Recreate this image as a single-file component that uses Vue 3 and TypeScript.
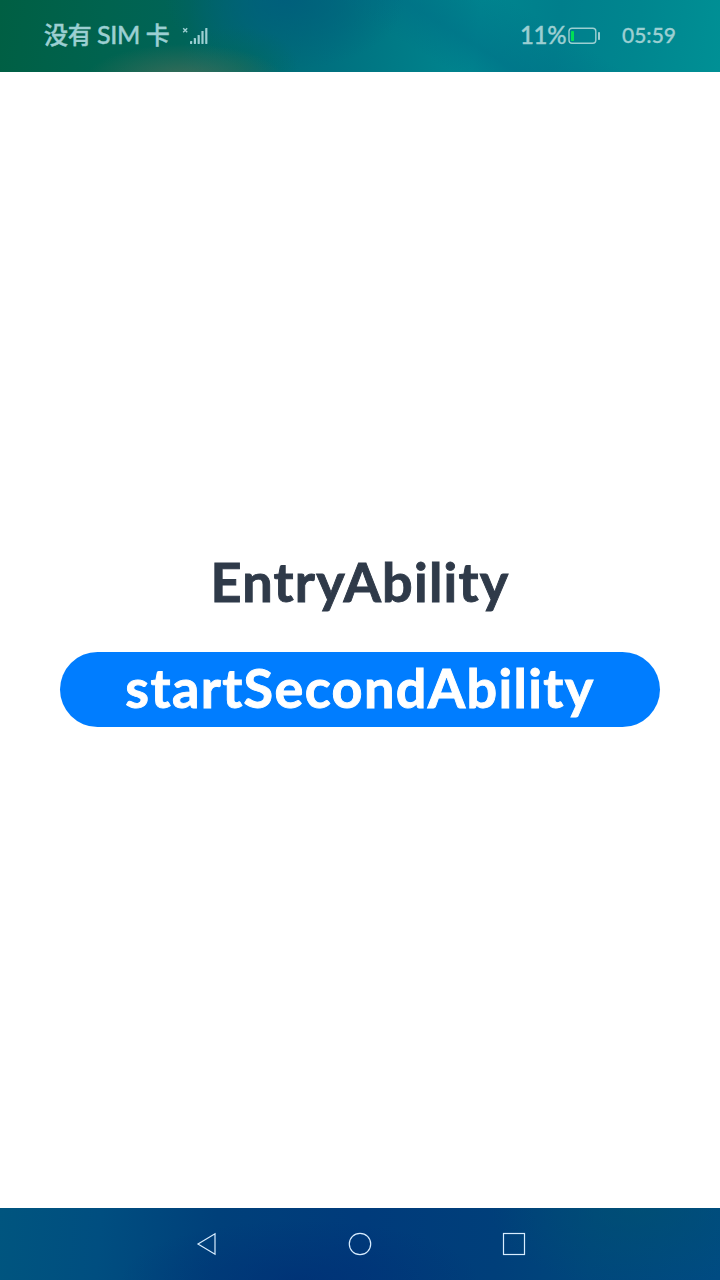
<script setup lang="ts">
const signalBars: number[] = [3, 6, 9, 13, 16]
</script>

<template>
  <div class="screen">
    <header class="status">
      <span class="carrier">没有 <span class="sim">SIM</span> 卡</span>
      <svg class="signal" width="26" height="20" viewBox="0 0 26 20">
        <path d="M1.2 2.2 5.2 6.2M5.2 2.2 1.2 6.2" stroke="currentColor" stroke-width="1.4" />
        <rect
          v-for="(h, i) in signalBars"
          :key="h"
          :x="8 + i * 3.8"
          :y="18 - h"
          width="2.2"
          :height="h"
          rx="0.4"
          fill="currentColor"
        />
      </svg>
      <span class="percent">11%</span>
      <svg class="battery" width="33" height="18" viewBox="0 0 33 18">
        <rect x="1" y="1.2" width="26.8" height="15" rx="3" fill="none" stroke="currentColor" stroke-width="1.4" />
        <rect x="3" y="4" width="3" height="10" rx="0.8" fill="#00df55" />
        <rect x="30" y="5" width="2" height="8" rx="0.8" fill="currentColor" />
      </svg>
      <time class="clock">05:59</time>
    </header>
    <main class="content">
      <h1 class="title">EntryAbility</h1>
      <button class="start"><span class="label">startSecondAbility</span></button>
    </main>
    <nav class="nav">
      <svg width="24" height="24" viewBox="0 0 24 24"><path d="M4 12 21 1.8V22.2Z" /></svg>
      <svg width="24" height="24" viewBox="0 0 24 24"><circle cx="12" cy="12" r="10.7" /></svg>
      <svg width="24" height="24" viewBox="0 0 24 24"><rect x="1.5" y="1.5" width="21" height="21" /></svg>
    </nav>
  </div>
</template>

<style>
body {
  margin: 0;
}
</style>

<style scoped>
.screen {
  width: 720px;
  height: 1280px;
  display: flex;
  flex-direction: column;
  background: #fff;
  font-family: Lato, "Noto Sans CJK SC", sans-serif;
  overflow: hidden;
}
.status {
  box-sizing: border-box;
  height: 72px;
  flex: none;
  display: flex;
  align-items: center;
  padding: 0 44px;
  color: #9ccfd2;
  background:
    radial-gradient(ellipse 100px 36px at 185px 80px, rgba(75, 110, 88, 0.8), rgba(75, 110, 88, 0)),
    radial-gradient(ellipse 60px 40px at 238px 66px, rgba(0, 104, 88, 0.6), rgba(0, 104, 88, 0)),
    radial-gradient(ellipse 120px 70px at 285px 0, rgba(0, 94, 124, 0.9), rgba(0, 94, 124, 0)),
    linear-gradient(212deg, rgba(0, 110, 135, 0) 25%, rgba(0, 110, 135, 0.5) 38%, rgba(0, 110, 135, 0) 46%),
    linear-gradient(98deg, #005f43 0, #00634f 15%, #006458 26%, #006a74 36%, #00707f 46%, #007a86 55%, #00858f 66%, #007f8c 77%, #00868f 88%, #009095 100%);
}
.carrier {
  width: 138px;
  font-size: 24px;
  font-weight: 500;
  line-height: 36px;
  letter-spacing: -0.35px;
  white-space: pre;
  padding-bottom: 3px;
  -webkit-text-stroke: 0.4px currentColor;
}
.sim {
  font-size: 25px;
}
.signal {
  flex: none;
}
.percent {
  margin-left: auto;
  width: 48px;
  font-size: 24px;
  font-weight: 500;
  letter-spacing: -0.3px;
  padding-bottom: 3px;
  -webkit-text-stroke: 0.4px currentColor;
}
.battery {
  flex: none;
}
.clock {
  width: 54px;
  margin-left: 21px;
  font-size: 21px;
  font-weight: 500;
  padding-bottom: 3px;
  -webkit-text-stroke: 0.3px currentColor;
}
.content {
  flex: 1;
  display: flex;
  flex-direction: column;
  align-items: center;
  padding-top: 474px;
}
.title {
  margin: 0;
  height: 72px;
  font-size: 54px;
  font-weight: 700;
  line-height: 72px;
  letter-spacing: 1.2px;
  color: #2f3a49;
  white-space: nowrap;
  -webkit-text-stroke: 0.9px currentColor;
}
.start {
  width: 600px;
  height: 75px;
  margin-top: 34px;
  padding: 0 0 3px;
  border: 0;
  border-radius: 38px;
  background: #007dff;
  color: #fff;
  font: 700 54px/72px Lato, sans-serif;
  letter-spacing: 1.35px;
  white-space: nowrap;
  -webkit-text-stroke: 0.9px currentColor;
}
.nav {
  height: 72px;
  flex: none;
  display: flex;
  align-items: center;
  justify-content: center;
  gap: 130px;
  background:
    radial-gradient(ellipse 150px 80px at 640px 0, rgba(0, 82, 112, 0.6), rgba(0, 82, 112, 0)),
    radial-gradient(ellipse 180px 60px at 300px 72px, rgba(0, 42, 115, 0.5), rgba(0, 42, 115, 0)),
    linear-gradient(95deg, #00557f 0, #004e80 14%, #00407a 30%, #003b7b 50%, #003f7a 69%, #00477c 82%, #004b82 100%);
}
.nav svg {
  fill: none;
  stroke: #d8edff;
  stroke-width: 1.2;
}
</style>
